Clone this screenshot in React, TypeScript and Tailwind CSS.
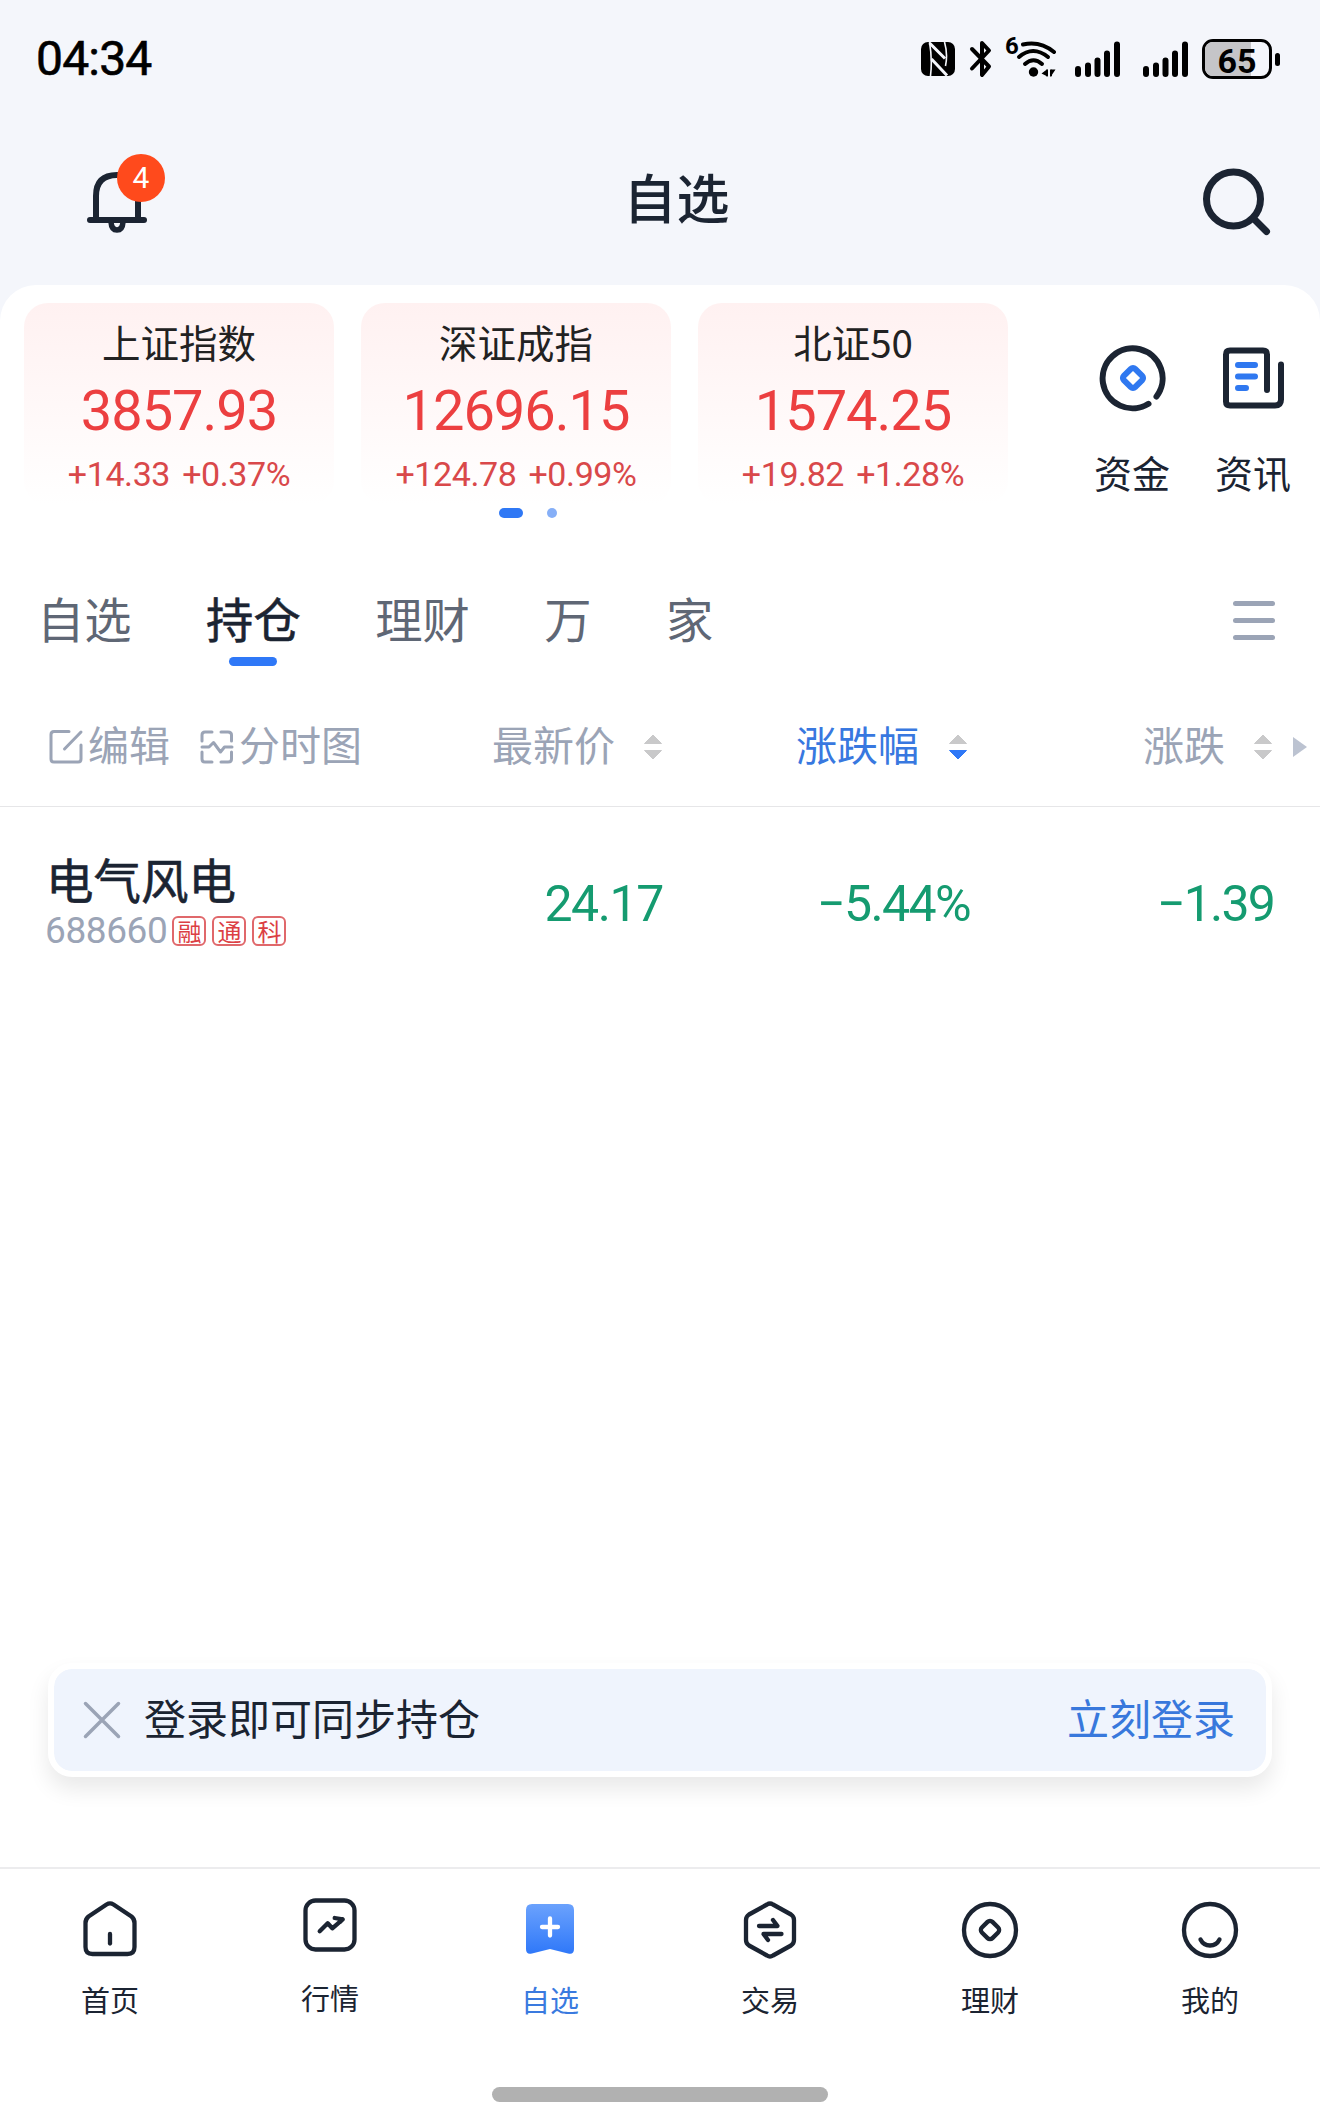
import React from 'react';

interface IndexCard {
  name: string;
  value: string;
  change: string;
  percent: string;
}

interface NavItem {
  label: string;
  icon: React.ReactNode;
  active?: boolean;
  raised?: boolean;
}

const indexCards: IndexCard[] = [
  { name: '上证指数', value: '3857.93', change: '+14.33', percent: '+0.37%' },
  { name: '深证成指', value: '12696.15', change: '+124.78', percent: '+0.99%' },
  { name: '北证50', value: '1574.25', change: '+19.82', percent: '+1.28%' },
];

const tabs = ['自选', '持仓', '理财', '万', '家'];

const SignalIcon = () => (
  <svg width="46" height="38" viewBox="0 0 46 38" stroke="#000" strokeWidth="6" strokeLinecap="round">
    <path d="M3 29v5M13 25.500v8.500M22.500 20.500v13.500M32 13.500v20.500M42 4.500v29.500" />
  </svg>
);

const StatusBar = () => (
  <div className="flex h-[118px] items-center pl-[36px] pr-[40px]">
    <span className="font-['Roboto',sans-serif] text-[48px] leading-none tracking-[-0.8px] text-black [-webkit-text-stroke:0.6px]">04:34</span>
    <div className="ml-auto flex items-center">
      {/* NFC */}
      <svg width="34" height="34" viewBox="0 0 34 34">
        <rect width="34" height="34" rx="7" fill="#000" />
        <path d="M8.500 0 Q11.500 17 9.500 34 M23.500 0 Q27 12 24.500 24" stroke="#f4f6fb" strokeWidth="1.600" fill="none" />
        <path d="M8.500 1 L24 16.500 M10.500 17 L26 33.500" stroke="#f4f6fb" strokeWidth="3" fill="none" />
      </svg>
      {/* Bluetooth */}
      <svg className="ml-[14px]" width="24" height="38" viewBox="0 0 24 38" fill="none" stroke="#000" strokeWidth="4" strokeLinecap="round" strokeLinejoin="round">
        <path d="M3 9 L20 26.500 L13 35 L13 3 L20 10.500 L3 28.500" />
      </svg>
      {/* Wi-Fi 6 */}
      <div className="relative ml-[13px] h-[40px] w-[52px]">
        <span className="absolute left-[-1px] top-[-2px] font-['Roboto',sans-serif] text-[24px] font-bold leading-[19px]">6</span>
        <svg className="absolute left-0 top-0" width="52" height="40" viewBox="0 0 52 40" fill="none" stroke="#000" strokeWidth="4" strokeLinecap="round">
          <path d="M17 5.500 Q34 1.500 48 13" />
          <path d="M13 18 Q27 6 42 18" />
          <path d="M19 25 Q27.500 17.500 36 25" />
          <circle cx="27.500" cy="33" r="4.700" fill="#000" stroke="none" />
          <path d="M41.500 30v7.500l-6-3zM43 30v7.500zM44.500 30.500h5l-5 7.500z" fill="#000" stroke="none" />
          <path d="M41 31.500v5M45 31.500v5" strokeWidth="2" />
        </svg>
      </div>
      <div className="ml-[17px]"><SignalIcon /></div>
      <div className="ml-[22px]"><SignalIcon /></div>
      {/* Battery */}
      <div className="relative ml-[13px] flex h-[40px] w-[70px] items-center justify-center overflow-hidden rounded-[11px] border-[3px] border-black">
        <div className="absolute left-0 top-0 h-full w-[46px] bg-[#c5c5c8]" />
        <span className="relative mt-[3px] font-['Roboto',sans-serif] text-[34px] font-bold leading-none text-black">65</span>
      </div>
      <div className="ml-[3px] h-[13px] w-[5px] rounded-full bg-black" />
    </div>
  </div>
);

const Header = () => (
  <div className="flex h-[167px] items-start justify-between pl-[86px] pr-[48px]">
    <div className="relative mt-[34px] h-[84px] w-[82px]">
      <svg className="mt-[18px]" width="62" height="64" viewBox="0 0 62 64" fill="none" stroke="#1b2432" strokeWidth="6" strokeLinecap="round">
        <path d="M4 50 H58" />
        <path d="M10 49 V26 Q10 5 31 5 Q52 5 52 26 V49" />
        <path d="M25 52 Q25.500 60 31 60 Q36.500 60 37 52" strokeWidth="5.500" />
      </svg>
      <div className="absolute left-[31px] top-[2px] flex size-[48px] items-center justify-center rounded-full bg-[#ff4a1c] font-['Roboto',sans-serif] text-[30px] leading-none text-white">
        4
      </div>
    </div>
    <h1 className="mr-[15px] mt-[43px] text-[53px] font-medium leading-[70px] text-[#1b2432]">自选</h1>
    <svg className="mt-[48px]" width="72" height="72" viewBox="0 0 72 72" fill="none" stroke="#1b2432" strokeWidth="7" strokeLinecap="round">
      <circle cx="33.500" cy="33" r="27" />
      <path d="M54 53 L66.500 65.500" />
    </svg>
  </div>
);

const SortIcon = ({ down = false }: { down?: boolean }) => (
  <svg className="mt-[2px]" width="20" height="26" viewBox="0 0 20 26">
    <path d="M10 1 L18.500 9.500 H1.500Z" fill="#c9c9ca" stroke="#c9c9ca" strokeLinejoin="round" />
    <path d="M1.500 16.500 H18.500 L10 25Z" fill={down ? '#2f78f7' : '#c9c9ca'} stroke={down ? '#2f78f7' : '#c9c9ca'} strokeLinejoin="round" />
  </svg>
);

const Indices = () => (
  <div className="flex h-[202px] pl-[24px]">
    <div className="flex gap-[27px]">
      {indexCards.map((card) => (
        <div
          key={card.name}
          className="flex w-[310px] flex-col items-center rounded-[24px] bg-linear-to-b from-[#fff1f1] to-white"
        >
          <p className="mt-[10px] text-[38.500px] leading-[56px] text-[#222]">{card.name}</p>
          <p className="mt-[10px] font-['Roboto',sans-serif] text-[56px] leading-[64px] tracking-[-1px] text-[#ec3f40]">{card.value}</p>
          <p className="mt-[11px] font-['Roboto',sans-serif] text-[34px] leading-[40px] tracking-[-0.4px] text-[#d9484a] [word-spacing:4px]">
            {card.change} {card.percent}
          </p>
        </div>
      ))}
    </div>
    <div className="ml-[86px] flex gap-[45px]">
      <div className="flex w-[76px] flex-col items-center">
        <svg className="ml-[2px] mt-[41px]" width="68" height="68" viewBox="0 0 68 68" fill="none" strokeWidth="6" strokeLinecap="round">
          <path d="M57.500 52.500 A30 30 0 1 0 49.500 59.800" stroke="#1b2432" />
          <rect x="26" y="26" width="16" height="16" rx="3" transform="rotate(45 34 34)" stroke="#2f78f0" />
        </svg>
        <p className="mt-[32px] text-[38px] leading-[56px] text-[#1b2432]">资金</p>
      </div>
      <div className="flex w-[76px] flex-col items-center">
        <svg className="mt-[41px]" width="68" height="68" viewBox="0 0 68 68" fill="none" strokeWidth="6" strokeLinecap="round" strokeLinejoin="round">
          <path d="M48 46 V10.500 Q48 6.500 44 6.500 H11 Q7 6.500 7 10.500 V57.500 Q7 61.500 11 61.500 H56 Q62 61.500 62 55.500 V20.500" stroke="#1b2432" />
          <path d="M19 21 H36 M19 32.500 H36 M19 44 H27" stroke="#2f78f0" strokeWidth="6" />
        </svg>
        <p className="mt-[32px] text-[38px] leading-[56px] text-[#1b2432]">资讯</p>
      </div>
    </div>
  </div>
);

const Tabs = () => (
  <div className="mt-[66px] flex h-[84px] items-start justify-between pl-[37px] pr-[45px]">
    <div className="-mt-[2px] flex gap-[74.500px]">
      {tabs.map((tab) => (
        <div key={tab} className="flex flex-col items-center">
          <span
            className={
              tab === '持仓'
                ? 'text-[47.300px] leading-[72px] text-[#1b2432] [-webkit-text-stroke:0.6px]'
                : 'text-[47.300px] leading-[72px] text-[#5f6775]'
            }
          >
            {tab}
          </span>
          {tab === '持仓' && <div className="mt-[3px] h-[9px] w-[48px] rounded-full bg-[#2f78f7]" />}
        </div>
      ))}
    </div>
    <div className="mt-[17px] flex flex-col gap-[12px]">
      <div className="h-[5px] w-[42px] rounded-full bg-[#9ba4b6]" />
      <div className="h-[5px] w-[42px] rounded-full bg-[#9ba4b6]" />
      <div className="h-[5px] w-[42px] rounded-full bg-[#9ba4b6]" />
    </div>
  </div>
);

const TableHead = () => (
  <div className="flex h-[139px] items-center border-b border-[#e6e6e8] pl-[48px] pt-[18px] text-[41px] leading-[60px] text-[#9ba4b6]">
    <svg className="mr-[4px] mt-[2px]" width="36" height="36" viewBox="0 0 36 36" fill="none" stroke="#9ba4b6" strokeWidth="3" strokeLinecap="round">
      <path d="M21 2.500 H6 Q3 2.500 3 5.500 V30 Q3 33 6 33 H30 Q33 33 33 30 V16" />
      <path d="M16.500 20 L33 3" />
    </svg>
    <span className="pb-[6px]">编辑</span>
    <svg className="ml-[29px] mr-[4px] mt-[2px]" width="36" height="36" viewBox="0 0 36 36" fill="none" stroke="#9ba4b6" strokeWidth="3" strokeLinecap="round" strokeLinejoin="round">
      <path d="M3 12 V6 Q3 3 6 3 H13 M22 3 H29 Q32.500 3 32.500 6 V12 M3 23 V30 Q3 33 6 33 H13 M22 33 H29 Q32.500 33 32.500 30 V23" />
      <path d="M3 18 H10 L14.500 13.500 L21.500 23 L25.500 18 H33" />
    </svg>
    <span className="pb-[6px]">分时图</span>
    <span className="ml-[130px] mr-[28px] pb-[6px]">最新价</span>
    <SortIcon />
    <span className="ml-[133px] mr-[29px] pb-[6px] text-[#3878e0]">涨跌幅</span>
    <SortIcon down />
    <span className="ml-[175px] mr-[28px] pb-[6px]">涨跌</span>
    <SortIcon />
    <svg className="ml-[19px] mt-[2px]" width="16" height="22" viewBox="0 0 16 22">
      <path d="M1 1 L15 11 L1 21Z" fill="#bcc3d1" />
    </svg>
  </div>
);

const StockRow = () => (
  <div className="flex items-start pt-[40px] font-['Roboto',sans-serif] text-[50px] leading-[60px] text-[#159b70]">
    <div className="w-[386px] pl-[46px]">
      <p className="font-['Noto_Sans_CJK_SC',sans-serif] text-[47.500px] leading-[64px] text-[#1b2432] [-webkit-text-stroke:0.6px]">电气风电</p>
      <div className="mt-[2px] flex items-center gap-[6px]">
        <span className="ml-[-1px] mr-[-1px] text-[37px] leading-[36px] tracking-[-0.4px] text-[#9ba4b6]">688660</span>
        {['融', '通', '科'].map((tag) => (
          <span
            key={tag}
            className="flex h-[30px] w-[34px] items-center justify-center rounded-[6px] border-2 border-[#e0686b] font-['Noto_Sans_CJK_SC',sans-serif] text-[24px] leading-none text-[#dc3f44]"
          >
            {tag}
          </span>
        ))}
      </div>
    </div>
    <span className="mt-[27px] w-[277px] text-right tracking-[-1.400px]">24.17</span>
    <span className="mt-[27px] w-[307px] text-right tracking-[-1.600px]">−5.44%</span>
    <span className="mt-[27px] w-[304px] text-right tracking-[-1.800px]">−1.39</span>
  </div>
);

const LoginBanner = () => (
  <div className="mx-[48px] flex h-[114px] items-center rounded-[24px] border-[6px] border-white bg-[#eff4fd] bg-clip-padding pl-[29px] pr-[31px] text-[42px] leading-[60px] shadow-[0_12px_22px_rgba(0,0,0,0.09)]">
    <svg width="38" height="38" viewBox="0 0 38 38" stroke="#9ba4b6" strokeWidth="3.500" strokeLinecap="round">
      <path d="M2.500 2.500 L35.500 35.500 M35.500 2.500 L2.500 35.500" />
    </svg>
    <span className="ml-[23px] pb-[7px] text-[#1b2432]">登录即可同步持仓</span>
    <span className="ml-auto pb-[7px] text-[#3878dc]">立刻登录</span>
  </div>
);

const navItems: NavItem[] = [
  {
    label: '首页',
    icon: (
      <>
        <path d="M26.500 4.500 Q30 2.300 33.500 4.500 L51.500 16.500 Q54.500 19 54.500 23 V47 Q54.500 54 47.500 54 H12.500 Q5.500 54 5.500 47 V23 Q5.500 19 8.500 16.500Z" />
        <path d="M30 34 V43.500" />
      </>
    ),
  },
  {
    label: '行情',
    raised: true,
    icon: (
      <>
        <rect x="5.500" y="4.500" width="49" height="49" rx="10" />
        <path d="M19.700 35.300 L27.700 27.300 L32.300 32.300 L42.700 23.300 M34.700 22 L42.700 23.300 L40 26" />
      </>
    ),
  },
  {
    label: '自选',
    active: true,
    icon: (
      <>
        <defs>
          <linearGradient id="bookmark" x1="0" y1="0" x2="0" y2="1">
            <stop offset="0" stopColor="#6ba2fd" />
            <stop offset="1" stopColor="#2f78f9" />
          </linearGradient>
        </defs>
        <path d="M12 4 H48 Q54 4 54 10 V49 Q54 55 48 53.500 L30 49 L12 53.500 Q6 55 6 49 V10 Q6 4 12 4Z" fill="url(#bookmark)" stroke="none" />
        <path d="M30 18.500 V35.500 M22 27 H38" stroke="#fff" />
      </>
    ),
  },
  {
    label: '交易',
    icon: (
      <>
        <path d="M27 4.500 Q30 2.500 33 4.500 L51 14.500 Q54 16.500 54 20 V40 Q54 43.500 51 45.500 L33 55.500 Q30 57.500 27 55.500 L9 45.500 Q6 43.500 6 40 V20 Q6 16.500 9 14.500Z" />
        <path d="M19 26 H37.500 L33 20 M41.500 34 H23.500 L28 40" />
      </>
    ),
  },
  {
    label: '理财',
    icon: (
      <>
        <circle cx="30" cy="30" r="26" />
        <rect x="22.500" y="22.500" width="15" height="15" rx="3.500" transform="rotate(45 30 30)" />
      </>
    ),
  },
  {
    label: '我的',
    icon: (
      <>
        <circle cx="30" cy="30" r="26" />
        <path d="M20.500 39.500 Q23.500 45.500 30 45.500 Q36.500 45.500 39.500 39.500" />
      </>
    ),
  },
];

const BottomNav = () => (
  <nav className="flex h-[253px] flex-col items-center border-t-2 border-[#ececee]">
    <div className="grid w-full grid-cols-6">
      {navItems.map((item) => (
        <div key={item.label} className={item.raised ? 'flex flex-col items-center pt-[27px]' : 'flex flex-col items-center pt-[31px]'}>
          <svg width="60" height="60" viewBox="0 0 60 60" fill="none" stroke="#1b2432" strokeWidth="4.300" strokeLinecap="round" strokeLinejoin="round">
            {item.icon}
          </svg>
          <span
            className={
              item.active
                ? 'mt-[18px] text-[29px] leading-[42px] text-[#3a7adf]'
                : item.raised
                  ? 'mt-[20px] text-[29px] leading-[42px] text-[#1b2432]'
                  : 'mt-[18px] text-[29px] leading-[42px] text-[#1b2432]'
            }
          >
            {item.label}
          </span>
        </div>
      ))}
    </div>
    <div className="mb-[18px] mt-auto h-[15px] w-[336px] rounded-full bg-[#b1b1b1]" />
  </nav>
);

export default function App() {
  return (
    <div className="flex h-[2120px] w-[1320px] flex-col overflow-hidden whitespace-nowrap bg-[#f4f6fb] font-['Noto_Sans_CJK_SC',sans-serif]">
      <StatusBar />
      <Header />
      <main className="flex flex-1 flex-col rounded-t-[36px] bg-white pt-[18px]">
        <Indices />
        <div className="ml-[499px] mt-[3px] flex gap-[24px]">
          <div className="h-[10px] w-[24px] rounded-full bg-[#2f78f5]" />
          <div className="size-[10px] rounded-full bg-[#86aff7]" />
        </div>
        <Tabs />
        <TableHead />
        <StockRow />
        <div className="mt-auto pb-[90px]">
          <LoginBanner />
        </div>
        <BottomNav />
      </main>
    </div>
  );
}
